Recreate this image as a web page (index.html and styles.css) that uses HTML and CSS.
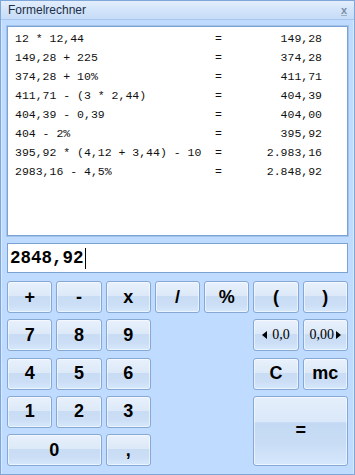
FILE: index.html
```html
<!DOCTYPE html>
<html>

<head>
    <meta charset="UTF-8">
    <title>Formelrechner</title>
    <link rel="stylesheet" href="styles.css">
</head>

<body>
    <div class="window">
        <div class="titleBar">
            <span class="title">Formelrechner</span>
            <span class="close">x</span>
        </div>
        <div class="panel">
            <div class="history">
                <div class="line"><span class="expr">12 * 12,44</span><span class="eq">=</span><span class="res">149,28</span></div>
                <div class="line"><span class="expr">149,28 + 225</span><span class="eq">=</span><span class="res">374,28</span></div>
                <div class="line"><span class="expr">374,28 + 10%</span><span class="eq">=</span><span class="res">411,71</span></div>
                <div class="line"><span class="expr">411,71 - (3 * 2,44)</span><span class="eq">=</span><span class="res">404,39</span></div>
                <div class="line"><span class="expr">404,39 - 0,39</span><span class="eq">=</span><span class="res">404,00</span></div>
                <div class="line"><span class="expr">404 - 2%</span><span class="eq">=</span><span class="res">395,92</span></div>
                <div class="line"><span class="expr">395,92 * (4,12 + 3,44) - 10</span><span class="eq">=</span><span class="res">2.983,16</span></div>
                <div class="line"><span class="expr">2983,16 - 4,5%</span><span class="eq">=</span><span class="res">2.848,92</span></div>
            </div>
            <div class="input">2848,92<span class="caret"></span></div>
            <div class="keys">
                <a href="javascript:;" class="key">+</a>
                <a href="javascript:;" class="key">-</a>
                <a href="javascript:;" class="key">x</a>
                <a href="javascript:;" class="key">/</a>
                <a href="javascript:;" class="key">%</a>
                <a href="javascript:;" class="key">(</a>
                <a href="javascript:;" class="key">)</a>

                <a href="javascript:;" class="key">7</a>
                <a href="javascript:;" class="key">8</a>
                <a href="javascript:;" class="key">9</a>
                <a href="javascript:;" class="key small dec-less">
                    <svg width="5" height="8" viewBox="0 0 5 8"><path d="M5 0 L0 4 L5 8 Z" fill="#000"/></svg>
                    <span>0,0</span>
                </a>
                <a href="javascript:;" class="key small">
                    <span>0,00</span>
                    <svg width="5" height="8" viewBox="0 0 5 8"><path d="M0 0 L5 4 L0 8 Z" fill="#000"/></svg>
                </a>

                <a href="javascript:;" class="key">4</a>
                <a href="javascript:;" class="key">5</a>
                <a href="javascript:;" class="key">6</a>
                <a href="javascript:;" class="key c-key">C</a>
                <a href="javascript:;" class="key">mc</a>

                <a href="javascript:;" class="key">1</a>
                <a href="javascript:;" class="key">2</a>
                <a href="javascript:;" class="key">3</a>
                <a href="javascript:;" class="key equals">=</a>

                <a href="javascript:;" class="key zero">0</a>
                <a href="javascript:;" class="key comma">,</a>
            </div>
        </div>
    </div>
</body>

</html>
```

FILE: styles.css
```css
* {
    margin: 0;
    padding: 0;
    box-sizing: border-box;
    text-decoration: none;
}

body {
    background-color: #bfdbff;
    font-family: "Liberation Sans", Arial, sans-serif;
}

.window {
    width: 355px;
    height: 475px;
    border: solid 1px #7fa6d8;
    background-color: #bfdbff;
    display: flex;
    flex-direction: column;
}

.titleBar {
    height: 19px;
    display: flex;
    align-items: center;
    justify-content: space-between;
    padding: 0 7px 0 7px;
    background: linear-gradient(#e3eefc, #d2e4fa 50%, #c6dcf8);
    border-bottom: solid 1px #a9c7ee;
}

.title {
    font-size: 12px;
    color: #1e2f46;
}

.close {
    font-size: 11px;
    font-weight: bold;
    color: #7b8ea6;
    line-height: 10px;
    border-bottom: solid 1px #9fb0c4;
}

.panel {
    flex: 1;
    padding: 6px 6px 0 6px;
    box-shadow: inset 1px 0 0 #d9e8fb, inset -1px 0 0 #d9e8fb;
}

.history {
    height: 210px;
    background-color: #fff;
    border: solid 1px #7ba2d4;
    box-shadow: 0 0 0 1px #a4c3ea;
    padding: 2px 0 0 7px;
    font-family: "Liberation Mono", "Courier New", monospace;
    font-size: 11.5px;
    color: #111;
}

.line {
    display: flex;
    height: 19px;
    line-height: 19px;
}

.expr {
    width: 200px;
    white-space: pre;
}

.eq {
    width: 7px;
    text-align: center;
}

.res {
    width: 100px;
    text-align: right;
}

.input {
    margin-top: 7px;
    height: 30px;
    background-color: #fff;
    border: solid 1px #7ba2d4;
    padding: 0 0 0 2px;
    display: flex;
    align-items: center;
    font-family: "Liberation Mono", "Courier New", monospace;
    font-size: 17.5px;
    font-weight: bold;
    color: #000;
}

.caret {
    width: 1px;
    height: 21px;
    margin-left: 1px;
    background-color: #000;
}

.keys {
    margin-top: 8px;
    display: grid;
    grid-template-columns: repeat(7, 1fr);
    grid-template-rows: repeat(5, 32px);
    column-gap: 4px;
    row-gap: 6.25px;
}

.key {
    display: flex;
    align-items: center;
    justify-content: center;
    border: solid 1px #86a8d4;
    border-radius: 3px;
    background: linear-gradient(#e8f1fc, #dde9f8 45%, #c8dcf3 47%, #cbdef5 75%, #d6e8fb);
    box-shadow: inset 0 0 0 1px rgba(255, 255, 255, 0.55);
    color: #000;
    font-size: 18px;
    font-weight: bold;
}

.key:nth-child(11) {
    grid-column: 6;
}

.c-key {
    grid-column: 6;
}

.small {
    font-family: "Liberation Serif", "Times New Roman", serif;
    font-weight: normal;
    font-size: 14px;
    gap: 2px;
}

.dec-less {
    gap: 5px;
}

.equals {
    grid-column: 6 / span 2;
    grid-row: 4 / span 2;
    background: linear-gradient(#e5effb, #dae8f9 36%, #c3d9f3 38%, #c9ddf5 70%, #d5e8fc);
}

.zero {
    grid-row: 5;
    grid-column: 1 / span 2;
}

.comma {
    grid-row: 5;
    grid-column: 3;
}
```
